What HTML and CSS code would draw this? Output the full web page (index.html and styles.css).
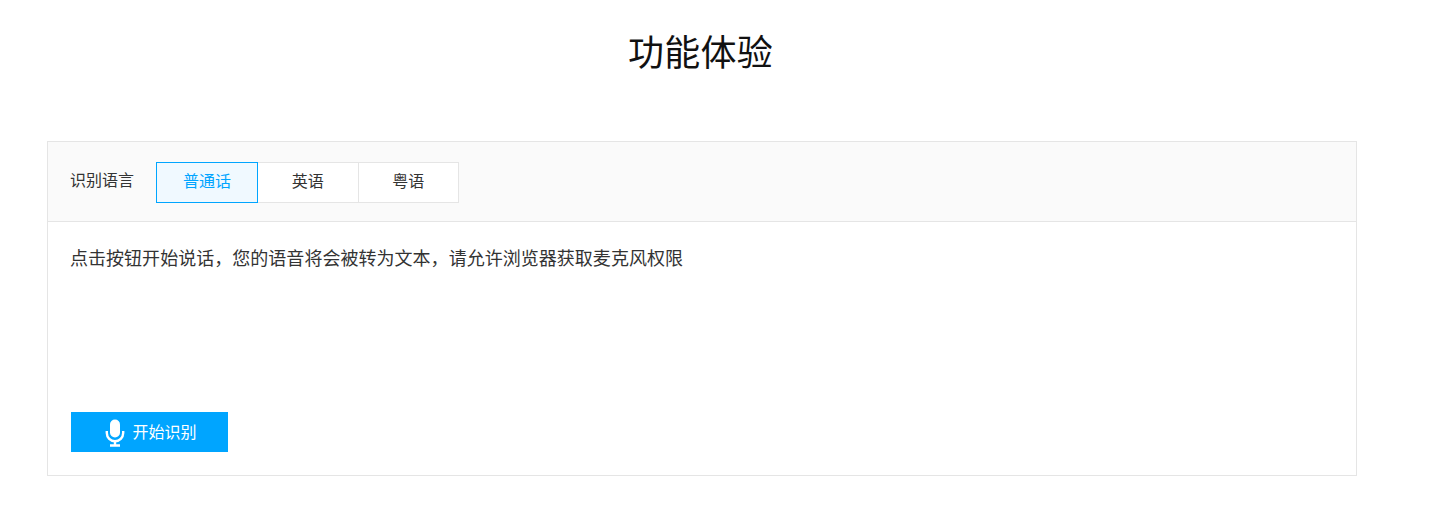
FILE: index.html
```html
<!DOCTYPE html>
<html>
<head>
    <meta charset="utf-8">
    <title>功能体验</title>
    <link rel="stylesheet" href="styles.css">
</head>
<body>
    <div class="container">
        <h1 class="page-title">功能体验</h1>

        <div class="panel">
            <div class="panel-header">
                <span class="lang-label">识别语言</span>
                <div class="lang-tabs">
                    <div class="lang-tab active">普通话</div>
                    <div class="lang-tab">英语</div>
                    <div class="lang-tab">粤语</div>
                </div>
            </div>
            <div class="panel-body">
                <p class="hint">点击按钮开始说话，您的语音将会被转为文本，请允许浏览器获取麦克风权限</p>
                <button class="start-button">
                    <svg class="mic-icon" width="20" height="28" viewBox="0 0 20 28">
                        <rect x="5" y="0.5" width="10" height="18" rx="5" fill="#fff"/>
                        <path d="M1.8 12v2a8.2 8.2 0 0 0 16.4 0v-2" fill="none" stroke="#fff" stroke-width="2.4"/>
                        <path d="M10 22v4.5M5 26.5h10" fill="none" stroke="#fff" stroke-width="2.4"/>
                    </svg>
                    <span class="start-text">开始识别</span>
                </button>
            </div>
        </div>
    </div>
</body>
</html>
```

FILE: styles.css
```css
* {
    box-sizing: border-box;
}

body {
    margin: 0;
    background-color: #fff;
    font-family: "Liberation Sans", "Noto Sans CJK SC", sans-serif;
    color: #333;
}

.container {
    width: 1310px;
    margin-left: 47px;
}

.page-title {
    margin: 0;
    padding: 28px 3px 0 0;
    height: 141px;
    font-size: 36px;
    line-height: 52px;
    font-weight: 400;
    letter-spacing: 0.2px;
    text-align: center;
    color: #111;
}

.panel {
    height: 335px;
    border: 1px solid #e5e5e5;
    display: flex;
    flex-direction: column;
}

.panel-header {
    height: 80px;
    padding: 0 22px;
    display: flex;
    align-items: center;
    background-color: #fafafa;
    border-bottom: 1px solid #e5e5e5;
}

.lang-label {
    width: 86px;
    font-size: 16px;
    line-height: 22px;
    margin-top: -1px;
}

.lang-tabs {
    display: flex;
    margin-top: 1px;
}

.lang-tab {
    width: 100.5px;
    height: 41px;
    border: 1px solid #e5e5e5;
    border-left: none;
    background-color: #fff;
    font-size: 16px;
    line-height: 37px;
    text-align: center;
}

.lang-tab.active {
    width: 102px;
    border: 1px solid #00a5ff;
    background-color: #f0f9ff;
    color: #00a5ff;
}

.panel-body {
    flex: 1;
    padding: 24px 22px 23px;
    display: flex;
    flex-direction: column;
    justify-content: space-between;
    align-items: flex-start;
}

.hint {
    margin: 0;
    font-size: 18px;
    line-height: 26px;
    letter-spacing: 0.03px;
}

.start-button {
    width: 157.5px;
    height: 40px;
    margin-left: 0.5px;
    border: none;
    padding: 0 0 0 3.5px;
    background-color: #00a5ff;
    color: #fff;
    font-family: inherit;
    font-size: 16px;
    display: flex;
    align-items: center;
    justify-content: center;
    gap: 7px;
}

.mic-icon {
    margin-top: 2px;
}

.start-text {
    line-height: 22px;
    margin-top: 1px;
}
```
